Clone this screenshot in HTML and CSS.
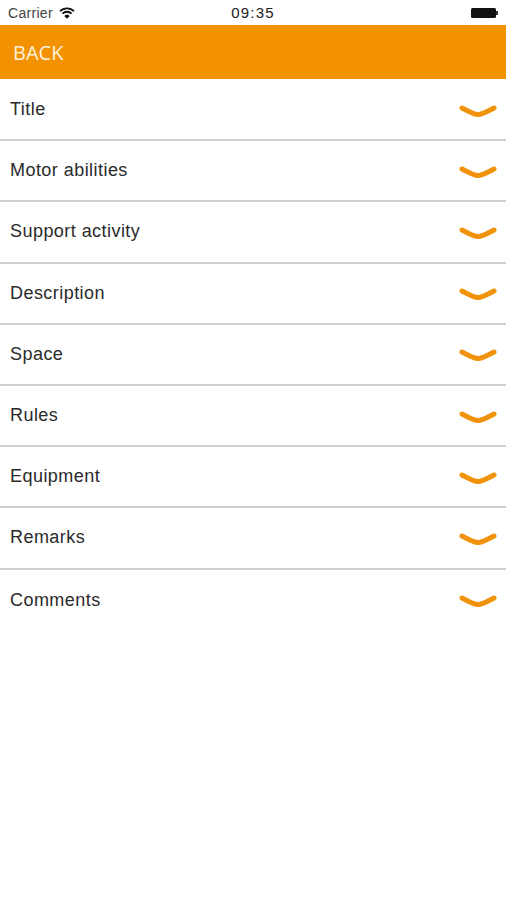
FILE: index.html
```
<!DOCTYPE html>
<html>
<head>
<meta charset="utf-8">
<link rel="stylesheet" href="styles.css">
</head>
<body>
<div class="status">
  <div class="status-left">
    <span class="carrier">Carrier</span>
    <svg class="wifi" width="16" height="12" viewBox="0 0 16 12">
      <path d="M1 4.2 A10 10 0 0 1 15 4.2" fill="none" stroke="#111" stroke-width="1.8"/>
      <path d="M3.4 6.6 A6.6 6.6 0 0 1 12.6 6.6" fill="none" stroke="#111" stroke-width="1.8"/>
      <path d="M5.8 9 A3.2 3.2 0 0 1 10.2 9 L8 11.3 Z" fill="#111" stroke="#111" stroke-width="1"/>
    </svg>
  </div>
  <div class="time">09:35</div>
  <div class="status-right">
    <div class="battery"></div>
    <div class="battery-tip"></div>
  </div>
</div>
<div class="header"><span class="back">BACK</span></div>
<ul class="list">
  <li class="row"><span class="label">Title</span><svg class="chev" viewBox="0 0 38 14"><path d="M3 4 Q16 11 19 10.5 Q22 11 35 4" fill="none" stroke="#f0930b" stroke-width="5" stroke-linecap="round" stroke-linejoin="round"/></svg></li>
  <li class="row"><span class="label">Motor abilities</span><svg class="chev" viewBox="0 0 38 14"><path d="M3 4 Q16 11 19 10.5 Q22 11 35 4" fill="none" stroke="#f0930b" stroke-width="5" stroke-linecap="round" stroke-linejoin="round"/></svg></li>
  <li class="row"><span class="label">Support activity</span><svg class="chev" viewBox="0 0 38 14"><path d="M3 4 Q16 11 19 10.5 Q22 11 35 4" fill="none" stroke="#f0930b" stroke-width="5" stroke-linecap="round" stroke-linejoin="round"/></svg></li>
  <li class="row"><span class="label">Description</span><svg class="chev" viewBox="0 0 38 14"><path d="M3 4 Q16 11 19 10.5 Q22 11 35 4" fill="none" stroke="#f0930b" stroke-width="5" stroke-linecap="round" stroke-linejoin="round"/></svg></li>
  <li class="row"><span class="label">Space</span><svg class="chev" viewBox="0 0 38 14"><path d="M3 4 Q16 11 19 10.5 Q22 11 35 4" fill="none" stroke="#f0930b" stroke-width="5" stroke-linecap="round" stroke-linejoin="round"/></svg></li>
  <li class="row"><span class="label">Rules</span><svg class="chev" viewBox="0 0 38 14"><path d="M3 4 Q16 11 19 10.5 Q22 11 35 4" fill="none" stroke="#f0930b" stroke-width="5" stroke-linecap="round" stroke-linejoin="round"/></svg></li>
  <li class="row"><span class="label">Equipment</span><svg class="chev" viewBox="0 0 38 14"><path d="M3 4 Q16 11 19 10.5 Q22 11 35 4" fill="none" stroke="#f0930b" stroke-width="5" stroke-linecap="round" stroke-linejoin="round"/></svg></li>
  <li class="row"><span class="label">Remarks</span><svg class="chev" viewBox="0 0 38 14"><path d="M3 4 Q16 11 19 10.5 Q22 11 35 4" fill="none" stroke="#f0930b" stroke-width="5" stroke-linecap="round" stroke-linejoin="round"/></svg></li>
  <li class="row last"><span class="label">Comments</span><svg class="chev" viewBox="0 0 38 14"><path d="M3 4 Q16 11 19 10.5 Q22 11 35 4" fill="none" stroke="#f0930b" stroke-width="5" stroke-linecap="round" stroke-linejoin="round"/></svg></li>
</ul>
</body>
</html>
```
FILE: styles.css
```
* { box-sizing: border-box; }
html, body { margin: 0; padding: 0; background: #fff; }
body { width: 506px; height: 900px; overflow: hidden; font-family: "Liberation Sans", Arial, sans-serif; }
.status {
  height: 25px;
  display: grid;
  grid-template-columns: 1fr auto 1fr;
  align-items: center;
  padding: 0 8px;
}
.status-left { display: flex; align-items: center; gap: 6px; }
.carrier { font-size: 14px; color: #444; letter-spacing: 0.3px; }
.wifi { display: block; }
.time { font-size: 15px; color: #222; letter-spacing: 1.2px; }
.status-right { display: flex; justify-content: flex-end; align-items: center; }
.battery { width: 25px; height: 10px; background: #111; border-radius: 1.5px; }
.battery-tip { width: 2px; height: 4px; background: #333; }
.header {
  height: 54px;
  background: #f39200;
  display: flex;
  align-items: center;
  padding-left: 13px;
}
.back { font-family: "Open Sans", sans-serif; font-size: 20px; color: #fdf1dc; }
.list { list-style: none; margin: 0; padding: 1px 0 0; }
.row {
  height: 61.2px;
  display: flex;
  align-items: center;
  justify-content: space-between;
  padding: 0 9px 0 10px;
  border-bottom: 2px solid #d0d0d0;
}
.row.last { border-bottom: none; }
.label { font-size: 18px; color: #2a2a2a; letter-spacing: 0.45px; }
.chev { width: 38px; height: 14px; display: block; margin-top: 2px; }
```
